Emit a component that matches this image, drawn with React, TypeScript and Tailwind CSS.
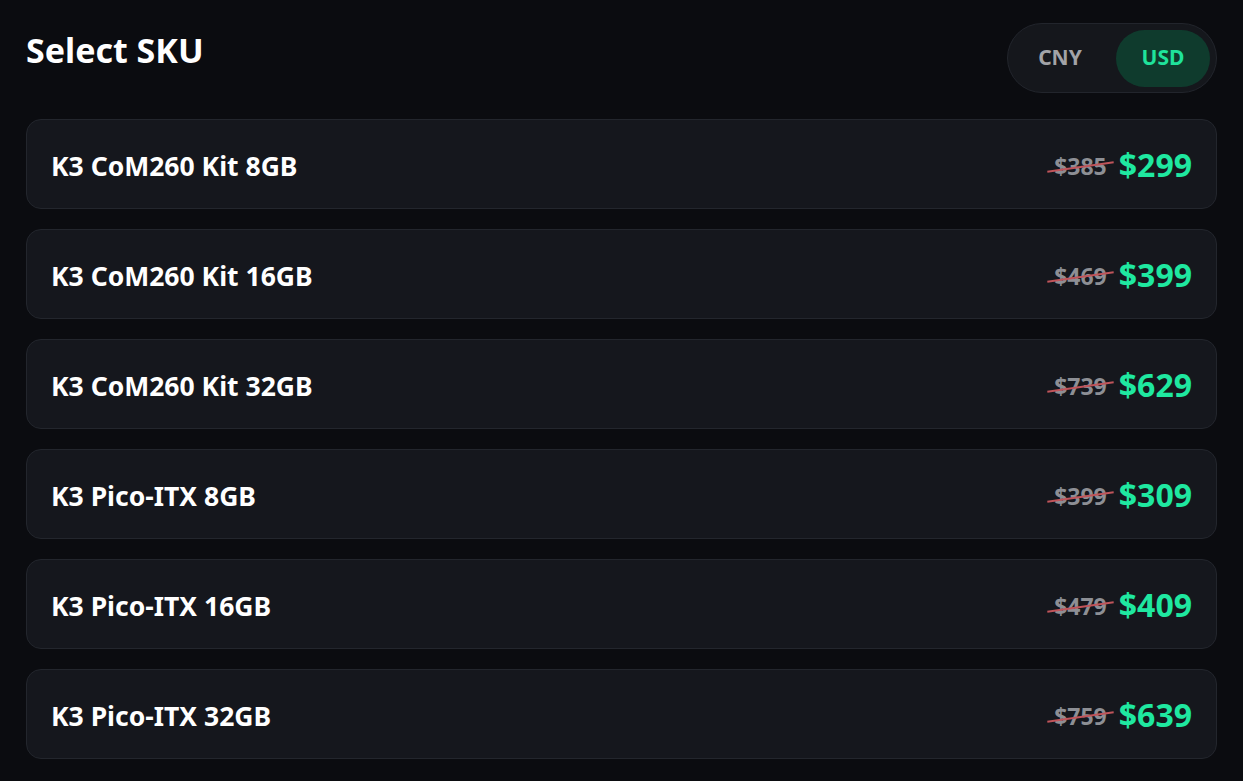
import { useState } from 'react';

const skus = [
  { name: 'K3 CoM260 Kit 8GB', old: 385, price: 299 },
  { name: 'K3 CoM260 Kit 16GB', old: 469, price: 399 },
  { name: 'K3 CoM260 Kit 32GB', old: 739, price: 629 },
  { name: 'K3 Pico-ITX 8GB', old: 399, price: 309 },
  { name: 'K3 Pico-ITX 16GB', old: 479, price: 409 },
  { name: 'K3 Pico-ITX 32GB', old: 759, price: 639 },
];

export default function App() {
  const [currency, setCurrency] = useState<'CNY' | 'USD'>('USD');

  return (
    <div className="min-h-screen w-full bg-[#0b0c10] px-[26px] pt-[23px] pb-[21px] text-white font-['Noto_Sans',sans-serif]">
      <div className="flex items-start justify-between">
        <h1 className="mt-[5px] text-[34px] font-bold leading-[44px]">Select SKU</h1>
        <div className="flex h-[70px] w-[210px] items-center rounded-full border border-[#22252c] bg-[#15171c] px-[6px]">
          <button
            onClick={() => setCurrency('CNY')}
            className={
              currency === 'CNY'
                ? 'flex h-[57px] flex-1 items-center justify-center rounded-full bg-[#0f3b2d] pr-[10px] text-[21px] font-bold text-[#1fe39b]'
                : 'flex h-[57px] flex-1 items-center justify-center rounded-full pr-[10px] text-[21px] font-bold text-[#a2a3a7]'
            }
          >
            CNY
          </button>
          <button
            onClick={() => setCurrency('USD')}
            className={
              currency === 'USD'
                ? 'flex h-[57px] w-[94px] items-center justify-center rounded-full bg-[#0f3b2d] text-[21px] font-bold text-[#1fe39b]'
                : 'flex h-[57px] w-[94px] items-center justify-center rounded-full text-[21px] font-bold text-[#a2a3a7]'
            }
          >
            USD
          </button>
        </div>
      </div>

      <div className="mt-[26px] flex flex-col gap-[20px]">
        {skus.map((s) => (
          <div
            key={s.name}
            className="flex h-[90px] items-center justify-between rounded-[15px] border border-[#23262d] bg-[#15171d] pl-[24px] pr-[24px]"
          >
            <span className="mt-[6px] text-[26.5px] font-bold">{s.name}</span>
            <div className="flex items-center gap-[12px]">
              <span className="relative mt-[4px] text-[23px] font-bold text-[#8d8f95]">
                ${s.old}
                <span className="absolute left-[-7px] right-[-7px] top-1/2 h-[2px] -rotate-[8deg] bg-[#c0545a]" />
              </span>
              <span className="mt-[2px] text-[32px] font-bold text-[#1fe8a0]">${s.price}</span>
            </div>
          </div>
        ))}
      </div>
    </div>
  );
}
